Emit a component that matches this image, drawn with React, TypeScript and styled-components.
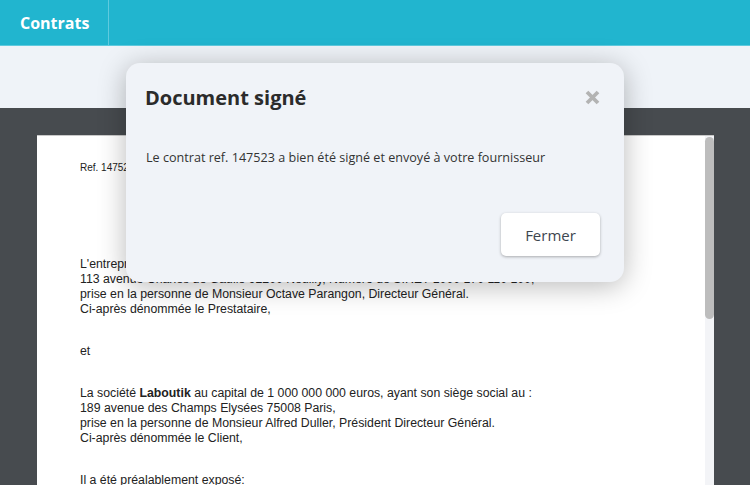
import React from "react"
import styled, { createGlobalStyle } from "styled-components"

const GlobalStyle = createGlobalStyle`
  html, body {
    margin: 0;
    padding: 0;
    overflow: hidden;
  }
  body {
    font-family: "Open Sans", "Noto Sans", sans-serif;
  }
`

const Screen = styled.div`
  position: relative;
  width: 750px;
  height: 485px;
  display: flex;
  flex-direction: column;
  overflow: hidden;
  background: #474b4f;
`

const TopBar = styled.header`
  height: 45px;
  background: #21b5cf;
  border-bottom: 1px solid #5fcade;
  display: flex;
  align-items: stretch;
  flex-shrink: 0;
`

const Brand = styled.div`
  width: 109px;
  box-sizing: border-box;
  padding-left: 20px;
  display: flex;
  align-items: center;
  color: #fff;
  font-weight: 700;
  font-size: 16px;
  border-right: 1px solid #5fcade;
`

const Band = styled.div`
  height: 62px;
  background: #eff3f8;
  flex-shrink: 0;
`

const Viewer = styled.div`
  flex: 1;
  display: flex;
  padding: 27px 36px 0 37px;
  min-height: 0;
`

const Page = styled.div`
  flex: 1;
  display: flex;
  background: #fff;
  border-top: 1px solid #c9c9c9;
  min-height: 0;
`

const Sheet = styled.div`
  flex: 1;
  padding: 24px 0 0 43px;
  font-family: "Liberation Sans", Arial, sans-serif;
  font-size: 12.3px;
  line-height: 15px;
  color: #222;
  overflow: hidden;
`

const Ref = styled.div`
  font-size: 10px;
  margin-bottom: 82px;
`

const Para = styled.p`
  margin: 0 0 27px;
`

const Track = styled.div`
  width: 9px;
  background: #f3f4f7;
  padding-top: 1px;
`

const Thumb = styled.div`
  height: 182px;
  background: #bdbdbd;
  border-radius: 5px;
`

const Dialog = styled.div`
  position: absolute;
  left: 126px;
  top: 63px;
  width: 498px;
  height: 219px;
  box-sizing: border-box;
  background: #f0f3f8;
  border-radius: 14px;
  box-shadow: 0 4px 28px rgba(0, 0, 0, 0.28);
  padding: 20px 24px 26px 19px;
  display: flex;
  flex-direction: column;
`

const DialogHead = styled.div`
  display: flex;
  justify-content: space-between;
  align-items: center;
  height: 28px;
`

const Title = styled.h2`
  margin: 0;
  font-size: 20px;
  font-weight: 700;
  color: #2b2b2b;
`

const Close = styled.button`
  border: 0;
  background: none;
  padding: 0;
  display: flex;
  cursor: pointer;
`

const Message = styled.p`
  margin: 38px 0 0 1px;
  font-size: 12.6px;
  color: #333;
`

const Actions = styled.div`
  margin-top: auto;
  display: flex;
  justify-content: flex-end;
`

const Button = styled.button`
  width: 99px;
  height: 43px;
  background: #fff;
  border: 0;
  border-radius: 5px;
  box-shadow: 0 1px 3px rgba(0, 0, 0, 0.3);
  font-family: "Open Sans", "Noto Sans", sans-serif;
  font-size: 15px;
  color: #3d4650;
  cursor: pointer;
`

export default function App() {
  return (
    <>
      <GlobalStyle />
      <Screen>
        <TopBar>
          <Brand>Contrats</Brand>
        </TopBar>
        <Band />
        <Viewer>
          <Page>
            <Sheet>
              <Ref>Ref. 147523</Ref>
              <Para>
                L'entreprise Octobox au capital de 10 000 euros, ayant son siège social au :<br />
                113 avenue Charles de Gaulle 92200 Neuilly, Numéro de SIRET 1000 170 110 100,<br />
                prise en la personne de Monsieur Octave Parangon, Directeur Général.<br />
                Ci-après dénommée le Prestataire,
              </Para>
              <Para>et</Para>
              <Para>
                La société <b>Laboutik</b> au capital de 1 000 000 000 euros, ayant son siège social au :<br />
                189 avenue des Champs Elysées 75008 Paris,<br />
                prise en la personne de Monsieur Alfred Duller, Président Directeur Général.<br />
                Ci-après dénommée le Client,
              </Para>
              <Para>Il a été préalablement exposé:</Para>
            </Sheet>
            <Track>
              <Thumb />
            </Track>
          </Page>
        </Viewer>
        <Dialog>
          <DialogHead>
            <Title>Document signé</Title>
            <Close aria-label="Fermer">
              <svg width="15" height="15" viewBox="0 0 15 15">
                <path d="M2 2 L13 13 M13 2 L2 13" stroke="#b3b3b3" strokeWidth="3.8" />
              </svg>
            </Close>
          </DialogHead>
          <Message>Le contrat ref. 147523 a bien été signé et envoyé à votre fournisseur</Message>
          <Actions>
            <Button>Fermer</Button>
          </Actions>
        </Dialog>
      </Screen>
    </>
  )
}
